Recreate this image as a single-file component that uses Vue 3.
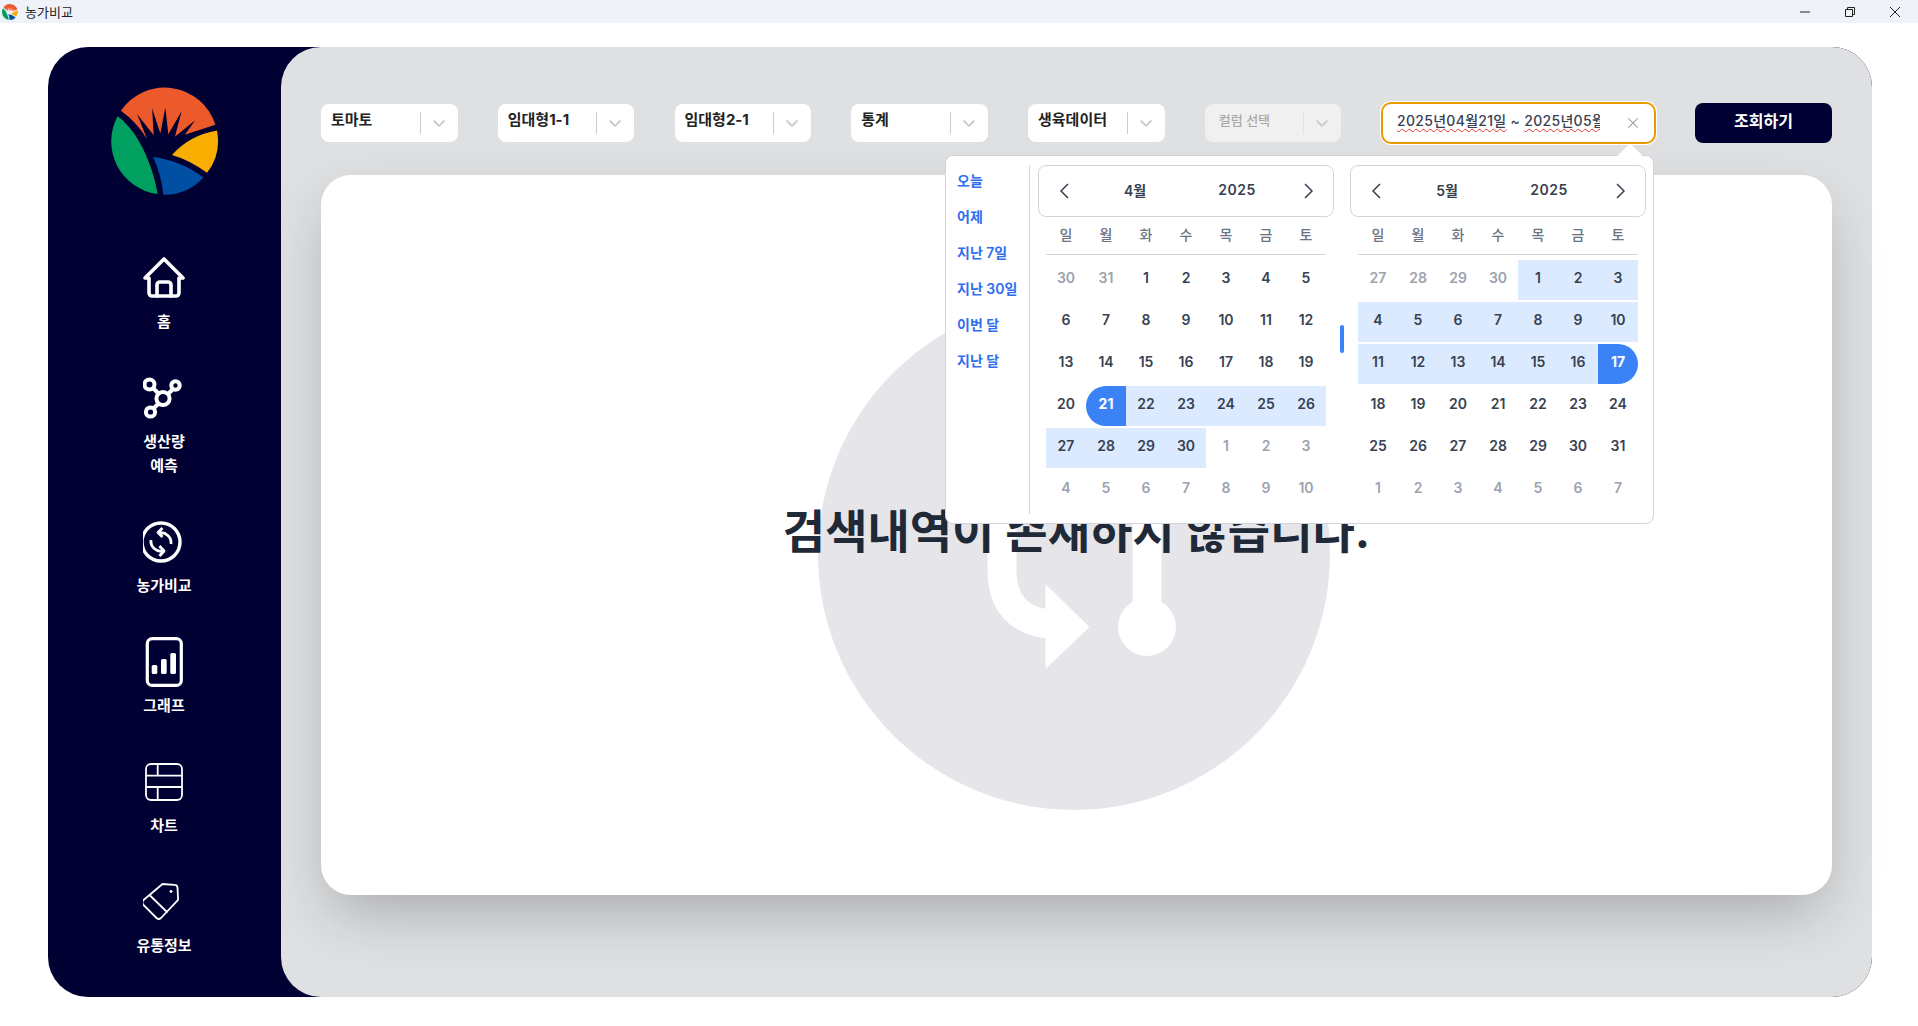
<template>
  <div class="window">
    <div class="titlebar">
      <svg class="title-logo" viewBox="336 260 320 326">
        <path v-for="p in logoPaths" :key="p.c" :d="p.d" :fill="p.c" />
      </svg>
      <span class="title-text">농가비교</span>
      <div class="win-controls">
        <svg viewBox="0 0 12 12"><path d="M1 6h10" /></svg>
        <svg viewBox="0 0 12 12"><path d="M1.500 3.500h7v7h-7z M3.500 3.500v-2h7v7h-2" /></svg>
        <svg viewBox="0 0 12 12"><path d="M1 1l10 10M11 1L1 11" /></svg>
      </div>
    </div>

    <div class="frame">
      <aside class="sidebar">
        <svg class="logo" viewBox="336 260 320 326">
          <path v-for="p in logoPaths" :key="p.c" :d="p.d" :fill="p.c" />
        </svg>
        <nav class="nav">
          <div class="nav-item">
            <svg class="nav-icon" viewBox="0 0 42 42" fill="none" stroke="#fff" stroke-width="3.600" stroke-linejoin="round" stroke-linecap="round">
              <path d="M2 21L21 2l19 19h-4v15a3 3 0 0 1-3 3H9a3 3 0 0 1-3-3V21z" />
              <path d="M14 39V28a3 3 0 0 1 3-3h8a3 3 0 0 1 3 3v11" />
            </svg>
            <span>홈</span>
          </div>
          <div class="nav-item">
            <svg class="nav-icon" viewBox="0 0 42 42" fill="none" stroke="#fff" stroke-width="4">
              <g transform="translate(-1 0)">
                <path d="M11 11l6 6M32 11l-7 7M16 27l-4 4" />
                <circle cx="7.500" cy="7.500" r="5" />
                <circle cx="33.500" cy="8.500" r="4.200" />
                <circle cx="21" cy="21.500" r="6.600" />
                <circle cx="8.500" cy="35" r="4.600" />
              </g>
            </svg>
            <span>생산량<br />예측</span>
          </div>
          <div class="nav-item">
            <svg class="nav-icon" viewBox="0 0 42 42" fill="none" stroke="#fff" stroke-width="3.400">
              <g transform="translate(-3 0)">
                <circle cx="21" cy="21" r="19" />
                <g stroke-width="2.800" stroke-linejoin="round">
                  <path d="M31 23A10 10 0 0 0 19 12" />
                  <path d="M22.500 7L18 11.500l4.500 4.500" />
                  <path d="M11 19a10 10 0 0 0 12 11" />
                  <path d="M19.500 25l4.500 5-4.500 5" />
                </g>
              </g>
            </svg>
            <span>농가비교</span>
          </div>
          <div class="nav-item">
            <svg class="nav-icon tall" viewBox="0 0 42 50">
              <rect x="4.300" y="1.600" width="34" height="46.800" rx="5" fill="none" stroke="#fff" stroke-width="3.200" />
              <rect x="8.700" y="28" width="5.600" height="9" rx="1.500" fill="#fff" />
              <rect x="18" y="22" width="5.700" height="15" rx="1.500" fill="#fff" />
              <rect x="27.300" y="16" width="5.700" height="21" rx="1.500" fill="#fff" />
            </svg>
            <span>그래프</span>
          </div>
          <div class="nav-item">
            <svg class="nav-icon" viewBox="0 0 42 42" fill="none" stroke="#fff" stroke-width="1.800">
              <rect x="3" y="3" width="36" height="36" rx="5" />
              <path d="M3 14.700h36M3 26h36M14.700 3v11.700M14.700 26v13" />
            </svg>
            <span>차트</span>
          </div>
          <div class="nav-item">
            <svg class="nav-icon" viewBox="0 0 42 42" fill="none" stroke="#fff" stroke-width="1.800" stroke-linejoin="round">
              <g transform="translate(-1 2)">
                <path d="M1.500 17l19-16 12 .8a3 3 0 0 1 3 3l.6 12L19 35a3.500 3.500 0 0 1-4.500 0L1.500 22a3.500 3.500 0 0 1 0-5z" />
                <path d="M8 12.500l17.500 17" />
                <circle cx="29" cy="8.500" r="1.400" fill="#fff" stroke="none" />
              </g>
            </svg>
            <span>유통정보</span>
          </div>
        </nav>
      </aside>

      <main class="main">
        <div class="filters">
          <div v-for="s in selects" :key="s.label" class="select" :class="{ disabled: s.disabled }">
            <span class="select-label">{{ s.label }}</span>
            <span class="select-sep"></span>
            <svg class="select-arrow" viewBox="0 0 20 20"><path d="M4.500 7.500a1 1 0 0 1 1.500 0l4 3.900 4-3.900a1 1 0 1 1 1.500 1.400l-4.800 4.700a1 1 0 0 1-1.400 0L4.500 8.900a1 1 0 0 1 0-1.400z" /></svg>
          </div>
          <div class="date-input">
            <div class="date-text">
              <span class="squiggle">2025년04월21일</span> ~ <span class="squiggle">2025년05월17일</span>
            </div>
            <svg class="date-clear" viewBox="0 0 14 14"><path d="M1.500 1.500l11 11M12.500 1.500l-11 11" /></svg>
          </div>
          <button class="search-btn">조회하기</button>

          <div class="popup">
            <span class="popup-arrow"></span>
            <ul class="shortcuts">
              <li v-for="s in shortcuts" :key="s">{{ s }}</li>
            </ul>
            <div class="calendars">
              <div v-for="cal in calendars" :key="cal.month" class="calendar">
                <div class="cal-head">
                  <svg class="cal-nav" viewBox="0 0 24 24"><path d="M15 5l-7 7 7 7" /></svg>
                  <span class="cal-month">{{ cal.month }}</span>
                  <span class="cal-year">2025</span>
                  <svg class="cal-nav" viewBox="0 0 24 24"><path d="M9 5l7 7-7 7" /></svg>
                </div>
                <div class="cal-week">
                  <span v-for="w in weekdays" :key="w">{{ w }}</span>
                </div>
                <div class="cal-days">
                  <span v-for="d in cal.days" :key="d.key" class="day" :class="d.cls">{{ d.n }}</span>
                </div>
              </div>
              <span class="scroll-thumb"></span>
            </div>
          </div>
        </div>

        <section class="card">
          <svg class="empty-bg" viewBox="0 0 512 512">
            <circle cx="256" cy="256" r="256" fill="#e5e5ea" />
            <path d="M184 100V272Q184 320 230 326" fill="none" stroke="#fff" stroke-width="29" />
            <path d="M227.500 286L271.500 329L227.500 371z" fill="#fff" />
            <path d="M314.500 100h29v210h-29z" fill="#fff" />
            <circle cx="329" cy="329" r="29" fill="#fff" />
          </svg>
          <p class="empty-text">검색내역이 존재하지 않습니다.</p>
        </section>
      </main>
    </div>
  </div>
</template>

<script setup>
const logoPaths = [
  { c: '#ec5a2c', d: 'M363 332A160 160 0 0 1 648 374L556 404L587 360L526 410L546 333L506 403L497 322L482 400L457 324L462 406L412 342L442 418Q410 365 363 332Z' },
  { c: '#00a160', d: 'M353 348C410 390 455 480 474 583A160 160 0 0 1 353 348Z' },
  { c: '#004fa3', d: 'M460 471Q545 482 612 533A160 160 0 0 1 491 585Q485 525 460 471Z' },
  { c: '#f7ae00', d: 'M517 465Q570 405 653 391A160 160 0 0 1 623 519Q570 480 517 465Z' }
]

const selects = [
  { label: '토마토' },
  { label: '임대형1-1' },
  { label: '임대형2-1' },
  { label: '통계' },
  { label: '생육데이터' },
  { label: '컬럼 선택', disabled: true }
]

const shortcuts = ['오늘', '어제', '지난 7일', '지난 30일', '이번 달', '지난 달']
const weekdays = ['일', '월', '화', '수', '목', '금', '토']

// month: 0-based, 42 cells from the sunday on or before the 1st
const buildDays = (month, from, to) => {
  const first = new Date(2025, month, 1)
  const days = []
  for (let i = 0; i < 42; i++) {
    const date = new Date(2025, month, 1 - first.getDay() + i)
    const cls = []
    const inMonth = date.getMonth() === month
    if (!inMonth) cls.push('muted')
    const stamp = date.getTime()
    if (inMonth && stamp === from) cls.push('active', 'start')
    else if (inMonth && stamp === to) cls.push('active', 'end')
    else if (inMonth && stamp > from && stamp < to) cls.push('range')
    days.push({ key: i, n: date.getDate(), cls })
  }
  return days
}

const from = new Date(2025, 3, 21).getTime()
const to = new Date(2025, 4, 17).getTime()

const calendars = [
  { month: '4월', days: buildDays(3, from, to) },
  { month: '5월', days: buildDays(4, from, to) }
]
</script>

<style>
body {
  margin: 0;
  background: #fff;
}
</style>

<style scoped>
.window {
  width: 1918px;
  height: 1026px;
  overflow: hidden;
  background: #fff;
  font-family: Inter, "Noto Sans CJK KR", sans-serif;
}

.titlebar {
  height: 23px;
  background: #eff2f9;
  display: flex;
  align-items: center;
  padding-left: 2px;
}
.title-logo {
  width: 16px;
  height: 16px;
}
.title-text {
  margin-left: 7px;
  font-size: 13px;
  color: #222;
}
.win-controls {
  margin-left: auto;
  display: flex;
  gap: 33px;
  padding-right: 17px;
}
.win-controls svg {
  width: 12px;
  height: 12px;
  fill: none;
  stroke: #222;
  stroke-width: 1;
}

.frame {
  margin: 24px 46px 0 48px;
  height: 950px;
  display: flex;
  background: #000033;
  border-radius: 40px;
}

.sidebar {
  flex: none;
  width: 232px;
  padding: 40px 1px 0 0;
  display: flex;
  flex-direction: column;
  align-items: center;
}
.logo {
  width: 108px;
  height: 108px;
  margin-left: 1.500px;
}
.nav {
  margin-top: 62px;
  display: flex;
  flex-direction: column;
  gap: 43.300px;
}
.nav-item {
  display: flex;
  flex-direction: column;
  align-items: center;
  color: #fff;
  font-size: 15px;
  font-weight: 700;
  line-height: 24px;
  text-align: center;
}
.nav-icon {
  width: 42px;
  height: 42px;
  margin-bottom: 10.700px;
}
.nav-icon.tall {
  height: 50px;
  margin-top: -4px;
  margin-bottom: 6.700px;
}

.main {
  flex: 1;
  min-width: 0;
  background: #dfe0e2;
  border-radius: 40px;
  padding: 56px 40px 0;
}

.filters {
  position: relative;
  display: flex;
  align-items: center;
  gap: 40.250px;
  height: 40px;
}
.select {
  flex: none;
  width: 136.500px;
  height: 38px;
  box-sizing: border-box;
  background: #fff;
  border-radius: 8px;
  display: flex;
  align-items: center;
  padding: 0 9px 0 10px;
  font-size: 15px;
  font-weight: 700;
  color: #222;
}
.select.disabled {
  background: #f0f0f1;
  color: #a8a8a8;
  font-size: 13px;
  font-weight: 500;
}
.select-label {
  flex: 1;
  margin-top: -9px;
  white-space: nowrap;
}
.select.disabled .select-label {
  margin-top: -8px;
  padding-left: 4px;
}
.select-sep {
  width: 1px;
  height: 22px;
  background: #ccc;
}
.select.disabled .select-sep {
  background: #e2e2e2;
}
.select-arrow {
  width: 20px;
  height: 20px;
  margin-left: 8px;
  fill: #ccc;
}

.date-input {
  flex: none;
  width: 275px;
  height: 42px;
  box-sizing: border-box;
  margin: 0 -1.250px 0 -0.500px;
  background: #fff;
  border: 2px solid #ea9a00;
  border-radius: 10px;
  box-shadow: 0 0 0 1px #fff;
  display: flex;
  align-items: center;
  padding: 0 15px 0 14px;
  font-size: 14px;
  font-weight: 500;
  letter-spacing: 0.3px;
  color: #374151;
}
.date-text {
  width: 203px;
  overflow: hidden;
  white-space: nowrap;
  margin-top: -5px;
  padding-bottom: 2px;
}
.squiggle {
  text-decoration: underline wavy #e0302a 1px;
  text-underline-offset: 2px;
}
.date-clear {
  width: 12px;
  height: 12px;
  margin-left: auto;
  fill: none;
  stroke: #9ca3af;
  stroke-width: 1.300;
}

.search-btn {
  flex: none;
  width: 137px;
  height: 40px;
  border: 0;
  border-radius: 8px;
  background: #000033;
  color: #fff;
  font: 700 16px Inter, "Noto Sans CJK KR", sans-serif;
  padding: 0 0 7px;
}

.popup {
  position: absolute;
  z-index: 2;
  left: 624px;
  top: 52px;
  width: 709px;
  height: 369px;
  box-sizing: border-box;
  background: #fff;
  border: 1px solid #d1d5db;
  border-radius: 8px;
  display: flex;
  padding: 9px 0 0;
}
.popup-arrow {
  position: absolute;
  left: 675px;
  top: -9px;
  width: 18px;
  height: 18px;
  background: #fff;
  transform: rotate(45deg);
  border-radius: 2px;
}
.shortcuts {
  width: 84px;
  height: 349px;
  box-sizing: border-box;
  margin: 0;
  padding: 0 0 0 11px;
  list-style: none;
  border-right: 1px solid #d1d5db;
  position: relative;
  font-size: 14px;
  font-weight: 600;
  line-height: 32px;
  color: #2f6fed;
}
.shortcuts li {
  height: 36px;
  white-space: nowrap;
}
.calendars {
  position: relative;
  display: flex;
  gap: 16px;
  padding-left: 8px;
}
.calendar {
  width: 296px;
}
.cal-head {
  height: 52px;
  box-sizing: border-box;
  border: 1px solid #d1d5db;
  border-radius: 8px;
  display: grid;
  grid-template-columns: 51px 90px 90px 1fr;
  align-items: center;
  font-size: 14px;
  font-weight: 600;
  color: #374151;
  padding-right: 13px;
}
.cal-nav {
  width: 24px;
  height: 24px;
  fill: none;
  stroke: #374151;
  stroke-width: 1.500;
  margin-left: 14px;
}
.cal-head .cal-nav:last-child {
  justify-self: end;
  margin: 0;
}
.cal-month {
  text-align: center;
  padding-bottom: 3px;
}
.cal-year {
  text-align: center;
  padding-bottom: 3px;
  margin-left: 24px;
  letter-spacing: 0.5px;
}
.cal-week {
  margin: 0 8px;
  height: 38px;
  box-sizing: border-box;
  padding-bottom: 4px;
  display: grid;
  grid-template-columns: repeat(7, 40px);
  align-items: center;
  text-align: center;
  border-bottom: 1px solid #d1d5db;
  font-size: 14px;
  font-weight: 500;
  color: #6b7280;
}
.cal-days {
  margin: 5px 8px 0;
  display: grid;
  grid-template-columns: repeat(7, 40px);
  grid-auto-rows: 40px;
  row-gap: 2px;
}
.day {
  display: flex;
  align-items: center;
  justify-content: center;
  padding-bottom: 5px;
  box-sizing: border-box;
  font-size: 14px;
  font-weight: 600;
  color: #374151;
}
.day.muted {
  color: #9ca3af;
}
.day.range {
  background: #dbeafe;
}
.day.active {
  background: #3b82f6;
  color: #fff;
  font-weight: 700;
}
.day.start {
  border-radius: 20px 0 0 20px;
}
.day.end {
  border-radius: 0 20px 20px 0;
}
.scroll-thumb {
  position: absolute;
  left: 310px;
  top: 160px;
  width: 4px;
  height: 28px;
  border-radius: 2px;
  background: #3b82f6;
}

.card {
  position: relative;
  margin-top: 32px;
  height: 720px;
  background: #fff;
  border-radius: 30px;
  box-shadow: 0 25px 60px -10px rgba(0, 0, 0, 0.25);
  display: flex;
  justify-content: center;
  overflow: hidden;
}
.empty-bg {
  position: absolute;
  left: 497px;
  top: 123px;
  width: 512px;
  height: 512px;
}
.empty-text {
  position: relative;
  margin: 325px 0 0;
  font-size: 46px;
  line-height: 62px;
  font-weight: 700;
  color: #1f2937;
}
</style>
